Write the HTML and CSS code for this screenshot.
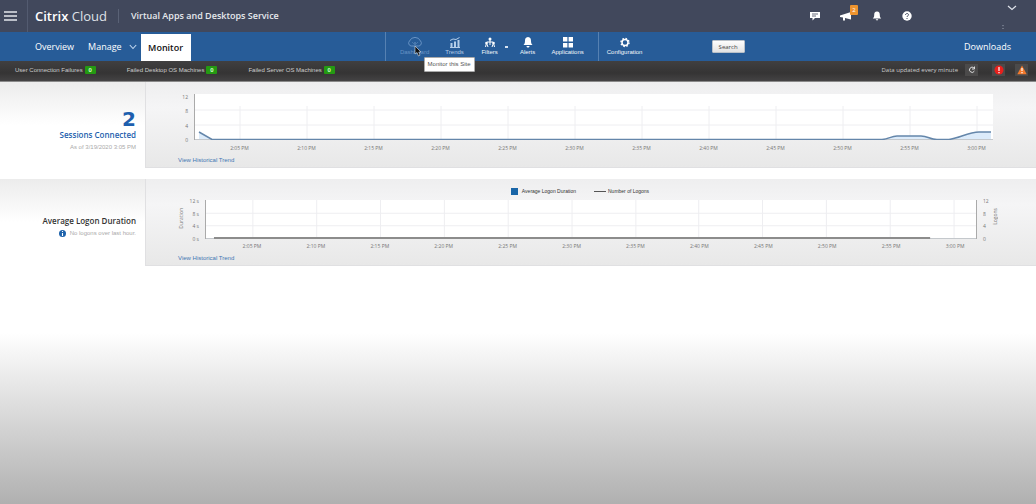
FILE: index.html
```html
<!DOCTYPE html>
<html lang="en">
<head>
<meta charset="utf-8">
<meta name="viewport" content="width=device-width, initial-scale=1">
<title>Citrix Cloud - Monitor</title>
<link rel="stylesheet" href="styles.css">
</head>
<body>
<header class="topbar">
  <button class="menu-btn" aria-label="Menu">
    <svg width="13" height="10" viewBox="0 0 13 10"><path d="M0 1h13M0 5h13M0 9h13" stroke="#e3e6ec" stroke-width="1.5"/></svg>
  </button>
  <div class="brand"><strong>Citrix</strong> Cloud</div>
  <div class="service">Virtual Apps and Desktops Service</div>
  <div class="top-icons">
    <button aria-label="Feedback"><svg width="10" height="10" viewBox="0 0 10 10"><path d="M0 1h10v6H5L2.500 9.500V7H0z" fill="#fff"/><path d="M2 3h6M2 5h4" stroke="#41485c" stroke-width=".8"/></svg></button>
    <button class="announce" aria-label="Announcements"><svg width="12" height="10" viewBox="0 0 12 10"><path d="M0 4.500 11 1v7.500L5 7v2.500H3V6.500L0 6z" fill="#fff"/></svg><span class="count">2</span></button>
    <button aria-label="Notifications"><svg width="10" height="10" viewBox="0 0 10 10"><path d="M5 .5c2.200 0 2.800 1.500 2.800 3.500 0 2 .6 2.500 1.400 3.500H.8C1.600 6.500 2.200 6 2.200 4 2.200 2 2.800.5 5 .5zM3.800 8.200h2.400c0 1.600-2.400 1.600-2.400 0z" fill="#fff"/></svg></button>
    <button aria-label="Help"><svg width="10" height="10" viewBox="0 0 10 10"><circle cx="5" cy="5" r="4.700" fill="#fff"/><path d="M3.500 4c0-2 3-2 3-.2C6.500 5 5 4.800 5 6M5 7v1" fill="none" stroke="#41485c"/></svg></button>
  </div>
  <button class="account" aria-label="Account">
    <svg width="16" height="26" viewBox="0 0 16 26"><path d="m7 3 4 3.500L15 3" fill="none" stroke="#dfe3ea" stroke-width="1.200"/><path d="M2 22v1.200M2 25v1" stroke="#9aa1b0"/></svg>
  </button>
</header>

<nav class="nav">
  <a class="nav-link" href="#">Overview</a>
  <a class="nav-link manage" href="#">Manage <svg width="8" height="6" viewBox="0 0 8 6"><path d="m.8 1 3.200 3.500L7.200 1" fill="none" stroke="#c2d8f0" stroke-width="1.100"/></svg></a>
  <a class="nav-link active" href="#">Monitor</a>
  <div class="tools">
    <button class="tool dashboard"><svg width="14" height="11" viewBox="0 0 14 11"><path d="M3.500 9H3a3 3 0 0 1-1.500-5 6 6 0 0 1 11 0A3 3 0 0 1 11 9h-.5zM7 8V5M4.500 5.500l1 1M9.500 5.500l-1 1" fill="none" stroke="currentColor"/></svg><span>Dashboard</span>
      <svg class="pointer" width="8" height="11" viewBox="0 0 8 11"><path d="M1 0v8l2-1.500L4.500 10 6 9.200 4.800 6H7z" fill="#111" stroke="#dce6f2" stroke-width=".6"/></svg>
      <span class="tip" role="tooltip">Monitor this Site</span></button>
    <button class="tool trends"><svg width="12" height="11" viewBox="0 0 12 11"><path d="M2.500 10V6M6 10V4.500M9.500 10V3" fill="none" stroke="currentColor" stroke-width="2"/><path d="M1 10.500h10M1 3.500 4 2l3 .5L10.500.5" fill="none" stroke="currentColor"/></svg><span>Trends</span></button>
    <button class="tool filters"><svg width="12" height="11" viewBox="0 0 12 11"><circle cx="6" cy="2" r="1.500" fill="#fff"/><circle cx="2.500" cy="6" r="1.300" fill="#fff"/><circle cx="9.500" cy="6" r="1.300" fill="#fff"/><path d="M6 2v6M2.500 6 1.500 10M2.500 6 4 10M9.500 6 8 10M9.500 6 10.500 10M3 5h6" fill="none" stroke="#fff"/></svg><span>Filters</span></button>
    <span class="caret"></span>
    <button class="tool"><svg width="10" height="11" viewBox="0 0 10 11"><path d="M5 0c2.500.3 3 2 3 4s.6 3 1.500 4h-9C1.400 7 2 6 2 4S2.500.3 5 0zM3.500 9h3c0 2-3 2-3 0z" fill="#fff"/></svg><span>Alerts</span></button>
    <button class="tool"><svg width="12" height="11" viewBox="0 0 12 11"><path d="M1 0h4.400v4.500H1zM6.600 0H11v4.500H6.600zM1 6h4.400v4.500H1zM6.600 6H11v4.500H6.600z" fill="#fff"/></svg><span>Applications</span></button>
    <span class="rule"></span>
    <button class="tool"><svg width="10" height="11" viewBox="0 0 10 11"><circle cx="5" cy="5.500" r="3" fill="none" stroke="#fff" stroke-width="1.500"/><circle cx="5" cy="5.500" r="4" fill="none" stroke="#fff" stroke-width="1.400" stroke-dasharray="1.570 1.570"/></svg><span>Configuration</span></button>
  </div>
  <button class="search">Search</button>
  <a class="downloads" href="#">Downloads</a>
</nav>

<div class="status">
  <div class="failure">User Connection Failures <b>0</b></div>
  <div class="failure">Failed Desktop OS Machines <b>0</b></div>
  <div class="failure">Failed Server OS Machines <b>0</b></div>
  <div class="updated">Data updated every minute</div>
  <button class="state" aria-label="Refresh"><svg width="8" height="8" viewBox="0 0 8 8"><path d="M6 2a2.600 2.600 0 1 0 .4 3M6.500.5V3H4" fill="none" stroke="#ddd"/></svg></button>
  <button class="state critical" aria-label="Critical alerts"><svg width="10" height="10" viewBox="0 0 10 10"><circle cx="5" cy="5" r="4.500" fill="#e8201c"/><path d="M5 2v4M5 7v1.200" stroke="#fff" stroke-width="1.200"/></svg></button>
  <button class="state warning" aria-label="Warnings"><svg width="10" height="10" viewBox="0 0 10 10"><path d="m5 .5 4.700 8.800H.3z" fill="#f47a2c"/><path d="M5 3v3M5 7v1.200" stroke="#fff" stroke-width="1.200"/></svg></button>
</div>

<main>
  <section class="panel">
    <div class="summary sessions">
      <div class="total">2</div>
      <h2>Sessions Connected</h2>
      <p>As of 3/19/2020 3:05 PM</p>
    </div>
    <div class="chart chart-sessions">
      <div class="y-axis"><span>12</span><span>8</span><span>4</span><span>0</span></div>
      <svg class="plot" viewBox="0 0 798 46" preserveAspectRatio="none" role="img" aria-label="Sessions connected over time">
        <path class="grid" d="M0 16H798M0 31H798M45 12V45M112 12V45M179 12V45M246 12V45M313 12V45M380 12V45M447 12V45M514 12V45M581 12V45M648 12V45M715 12V45M782 12V45"/>
        <path class="fill" d="M4 38 17 45H690L702 42H728L740 45H755L782 38H796V46H4z"/>
        <path class="base" d="M0 45.500H798"/>
        <path class="line" d="M4 38 17 45.500H687C694 45 696 42 702 42H726C733 42 735 45.500 742 45.500H754C764 44 774 38 784 38H796"/>
      </svg>
      <div class="x-axis"><span>2:05 PM</span><span>2:10 PM</span><span>2:15 PM</span><span>2:20 PM</span><span>2:25 PM</span><span>2:30 PM</span><span>2:35 PM</span><span>2:40 PM</span><span>2:45 PM</span><span>2:50 PM</span><span>2:55 PM</span><span>3:00 PM</span></div>
      <a class="history" href="#">View Historical Trend</a>
    </div>
  </section>

  <section class="panel">
    <div class="summary logon">
      <h2>Average Logon Duration</h2>
      <p><svg width="7" height="7" viewBox="0 0 7 7"><circle cx="3.500" cy="3.500" r="3.500" fill="#1d62ab"/><path d="M3.500 1v1M3.500 3v3" stroke="#fff" stroke-width="1.100"/></svg>No logons over last hour.</p>
    </div>
    <div class="chart chart-logon">
      <div class="legend"><span class="key-bar"></span><span class="key-name">Average Logon Duration</span><span class="key-line"></span><span>Number of Logons</span></div>
      <div class="y-axis"><em>Duration</em><span>12 s</span><span>8 s</span><span>4 s</span><span>0 s</span></div>
      <svg class="plot" viewBox="0 0 772 38" preserveAspectRatio="none" role="img" aria-label="Average logon duration over time">
        <path class="grid" d="M0 13H772M0 25H772M47 0V37M111 0V37M175 0V37M239 0V37M303 0V37M367 0V37M431 0V37M494 0V37M558 0V37M622 0V37M686 0V37M750 0V37"/>
        <path class="base" d="M0 37.500H772"/>
        <path class="flat" d="M8 37H726"/>
      </svg>
      <div class="y-axis right"><span>12</span><span>8</span><span>4</span><span>0</span><em>Logons</em></div>
      <div class="x-axis"><span>2:05 PM</span><span>2:10 PM</span><span>2:15 PM</span><span>2:20 PM</span><span>2:25 PM</span><span>2:30 PM</span><span>2:35 PM</span><span>2:40 PM</span><span>2:45 PM</span><span>2:50 PM</span><span>2:55 PM</span><span>3:00 PM</span></div>
      <a class="history" href="#">View Historical Trend</a>
    </div>
  </section>
</main>
</body>
</html>
```

FILE: styles.css
```css
* { box-sizing: border-box; }

body {
  margin: 0;
  min-height: 100vh;
  font: 6px/8px "Open Sans", "Noto Sans", sans-serif;
  color: #444;
  background: linear-gradient(#fff 66%, #b0b0b0) no-repeat;
}

button {
  margin: 0;
  padding: 0;
  border: 0;
  background: none;
  color: inherit;
  font: inherit;
}

a { text-decoration: none; }
svg { display: block; flex: none; }
h2, p { margin: 0; }

/* Top bar */
.topbar {
  display: flex;
  align-items: center;
  height: 32px;
  background: #41485c;
  color: #fff;
}
.menu-btn {
  width: 28px;
  height: 32px;
  padding-left: 4px;
  border-right: 1px solid #535b70;
}
.brand {
  padding: 0 11px 0 7px;
  border-right: 1px solid #5a6276;
  font-size: 13px;
  line-height: 14px;
  color: #dfe2e8;
}
.brand strong {
  color: #fff;
  font-weight: 600;
}
.service {
  padding-left: 12px;
  font-size: 9px;
  font-weight: 600;
  line-height: 14px;
  color: #e6e8ed;
}
.top-icons {
  display: flex;
  gap: 20px;
  margin-left: auto;
  margin-right: 89px;
}
.announce { position: relative; }
.count {
  position: absolute;
  top: -6px;
  left: 10px;
  width: 8px;
  border-radius: 1px;
  background: #ee942f;
  line-height: 10px;
}
.account { margin-right: 19px; }

/* Navigation */
.nav {
  display: flex;
  align-items: center;
  height: 29px;
  padding-left: 35px;
  background: #275c98;
  color: #f2f7fc;
}
.nav-link, .downloads {
  font-size: 9px;
  font-weight: 500;
  line-height: 29px;
  color: #fff;
}
.manage {
  display: flex;
  align-items: center;
  gap: 7px;
  margin: 0 4px 0 14px;
}
.nav-link.active {
  width: 50px;
  border-top: 1px solid #275c98;
  background: #fff;
  color: #111;
  font-weight: 600;
  line-height: 27px;
  text-align: center;
}
.tools {
  display: flex;
  align-items: center;
  height: 29px;
  margin-left: 194px;
  padding-left: 9px;
  border-left: 1px solid #5681b2;
}
.tool {
  position: relative;
  display: flex;
  flex-direction: column;
  align-items: center;
  gap: 1px;
  width: 40px;
  font: 6px/7px "Liberation Sans", sans-serif;
}
.dashboard { color: #6893c4; }
.trends { color: #b4cde8; }
.filters { width: 30px; }
.caret {
  width: 3px;
  height: 2px;
  background: #d6e3f2;
}
.rule {
  width: 1px;
  height: 29px;
  margin: 0 6px 0 10px;
  background: #5681b2;
}
.pointer {
  position: absolute;
  top: 9px;
  left: 19px;
}
.tip {
  position: absolute;
  z-index: 1;
  top: 20px;
  left: 29px;
  padding: 0 3px;
  border: 1px solid #aaa;
  border-radius: 1px;
  background: #fff;
  color: #555;
  line-height: 13px;
  white-space: nowrap;
}
.search {
  width: 33px;
  height: 13px;
  margin-left: 67px;
  border: 1px solid #b9c0c8;
  border-radius: 1px;
  background: linear-gradient(#fdfdfd, #e3e3e3);
  color: #444;
  line-height: 10px;
}
.downloads {
  margin-left: auto;
  margin-right: 25px;
}

/* Failure counters */
.status {
  display: flex;
  align-items: center;
  height: 21px;
  padding: 0 8px 2px 15px;
  border-bottom: 1px solid #8a8a8a;
  background: linear-gradient(#403f40, #353434 60%, #444344);
  color: #ccc;
}
.failure {
  display: flex;
  align-items: center;
  gap: 2px;
  margin-right: 31px;
  font: 6px/8px "Liberation Sans", sans-serif;
}
.failure b {
  width: 11px;
  border-radius: 1px;
  background: #249a12;
  color: #d6ffd0;
  text-align: center;
}
.updated { margin-left: auto; }
.state {
  display: flex;
  align-items: center;
  justify-content: center;
  width: 13px;
  height: 12px;
  margin-left: 7px;
  background: #4b4a4a;
}
.state.critical { margin-left: 14px; }
.state.warning { margin-left: 10px; }

/* Panels */
main {
  display: flex;
  flex-direction: column;
  gap: 11px;
}
.panel {
  display: grid;
  grid-template-columns: 145px 1fr;
  background: linear-gradient(#ececec, #fff 50%);
}
.summary {
  padding-right: 9px;
  text-align: right;
}
.sessions { padding-top: 26px; }
.logon { padding-top: 37px; }
.total {
  font: bold 20px/22px "DejaVu Sans", sans-serif;
  color: #1e5fae;
}
.summary h2 {
  font-size: 8px;
  font-weight: 600;
  line-height: 10px;
  color: #333;
}
.summary.sessions h2 { color: #1e5fae; }
.summary p {
  display: flex;
  align-items: center;
  justify-content: flex-end;
  gap: 4px;
  padding-top: 2px;
  font: 6px/10px "Liberation Sans", sans-serif;
  color: #aaa;
}

/* Charts */
.chart {
  display: grid;
  border: 1px solid #e0e0e2;
  border-width: 0 0 1px 1px;
  background: linear-gradient(#eeeeef, #f5f5f6 30%, #e8e8e8);
  font-size: 5px;
  line-height: 6px;
  color: #777;
}
.chart-sessions {
  grid-template-columns: 48px 1fr 43px;
  padding: 12px 0 3px;
}
.chart-logon {
  grid-template-columns: 59px 1fr 59px;
  padding: 7px 0 3px;
}
.plot {
  width: 100%;
  height: 46px;
  border-left: 1px solid #aaa;
  background: #fff;
}
.chart-logon .plot {
  height: 39px;
  border-right: 1px solid #aaa;
}
.plot path {
  fill: none;
  vector-effect: non-scaling-stroke;
}
.plot .grid { stroke: #eeeef1; }
.plot .fill { fill: #dcebfa; }
.plot .base { stroke: #c4c8cc; }
.plot .line { stroke: #6486aa; stroke-width: 1.500; }
.plot .flat { stroke: #8c8c8c; stroke-width: 2; }
.y-axis {
  position: relative;
  display: flex;
  flex-direction: column;
  justify-content: space-between;
  margin-bottom: -3px;
  padding-right: 6px;
  text-align: right;
}
.chart-logon .y-axis { margin-top: -2px; }
.y-axis.right {
  padding-left: 6px;
  text-align: left;
}
.y-axis em {
  position: absolute;
  top: 10px;
  left: 32px;
  font-style: normal;
  writing-mode: vertical-rl;
  transform: rotate(180deg);
}
.y-axis.right em { left: 15px; }
.x-axis {
  display: grid;
  grid-column: 1 / -1;
  grid-template-columns: repeat(12, 1fr);
  padding: 5px 26px 6px 60px;
  text-align: center;
}
.chart-logon .x-axis { padding: 4px 49px 6px 74px; }
.history {
  grid-column: 1 / -1;
  justify-self: start;
  margin-left: 32px;
  color: #3f76b3;
  font: 6px/7px "Liberation Sans", sans-serif;
}
.legend {
  display: flex;
  grid-column: 1 / -1;
  align-items: center;
  justify-content: center;
  height: 10px;
  margin-bottom: 4px;
  padding-right: 22px;
  color: #333;
  font-family: "Liberation Sans", sans-serif;
}
.key-bar {
  width: 7px;
  height: 7px;
  margin-right: 4px;
  background: #1a66a8;
}
.key-name { margin-right: 18px; }
.key-line {
  width: 12px;
  height: 1px;
  margin-right: 2px;
  background: #555;
}
```
